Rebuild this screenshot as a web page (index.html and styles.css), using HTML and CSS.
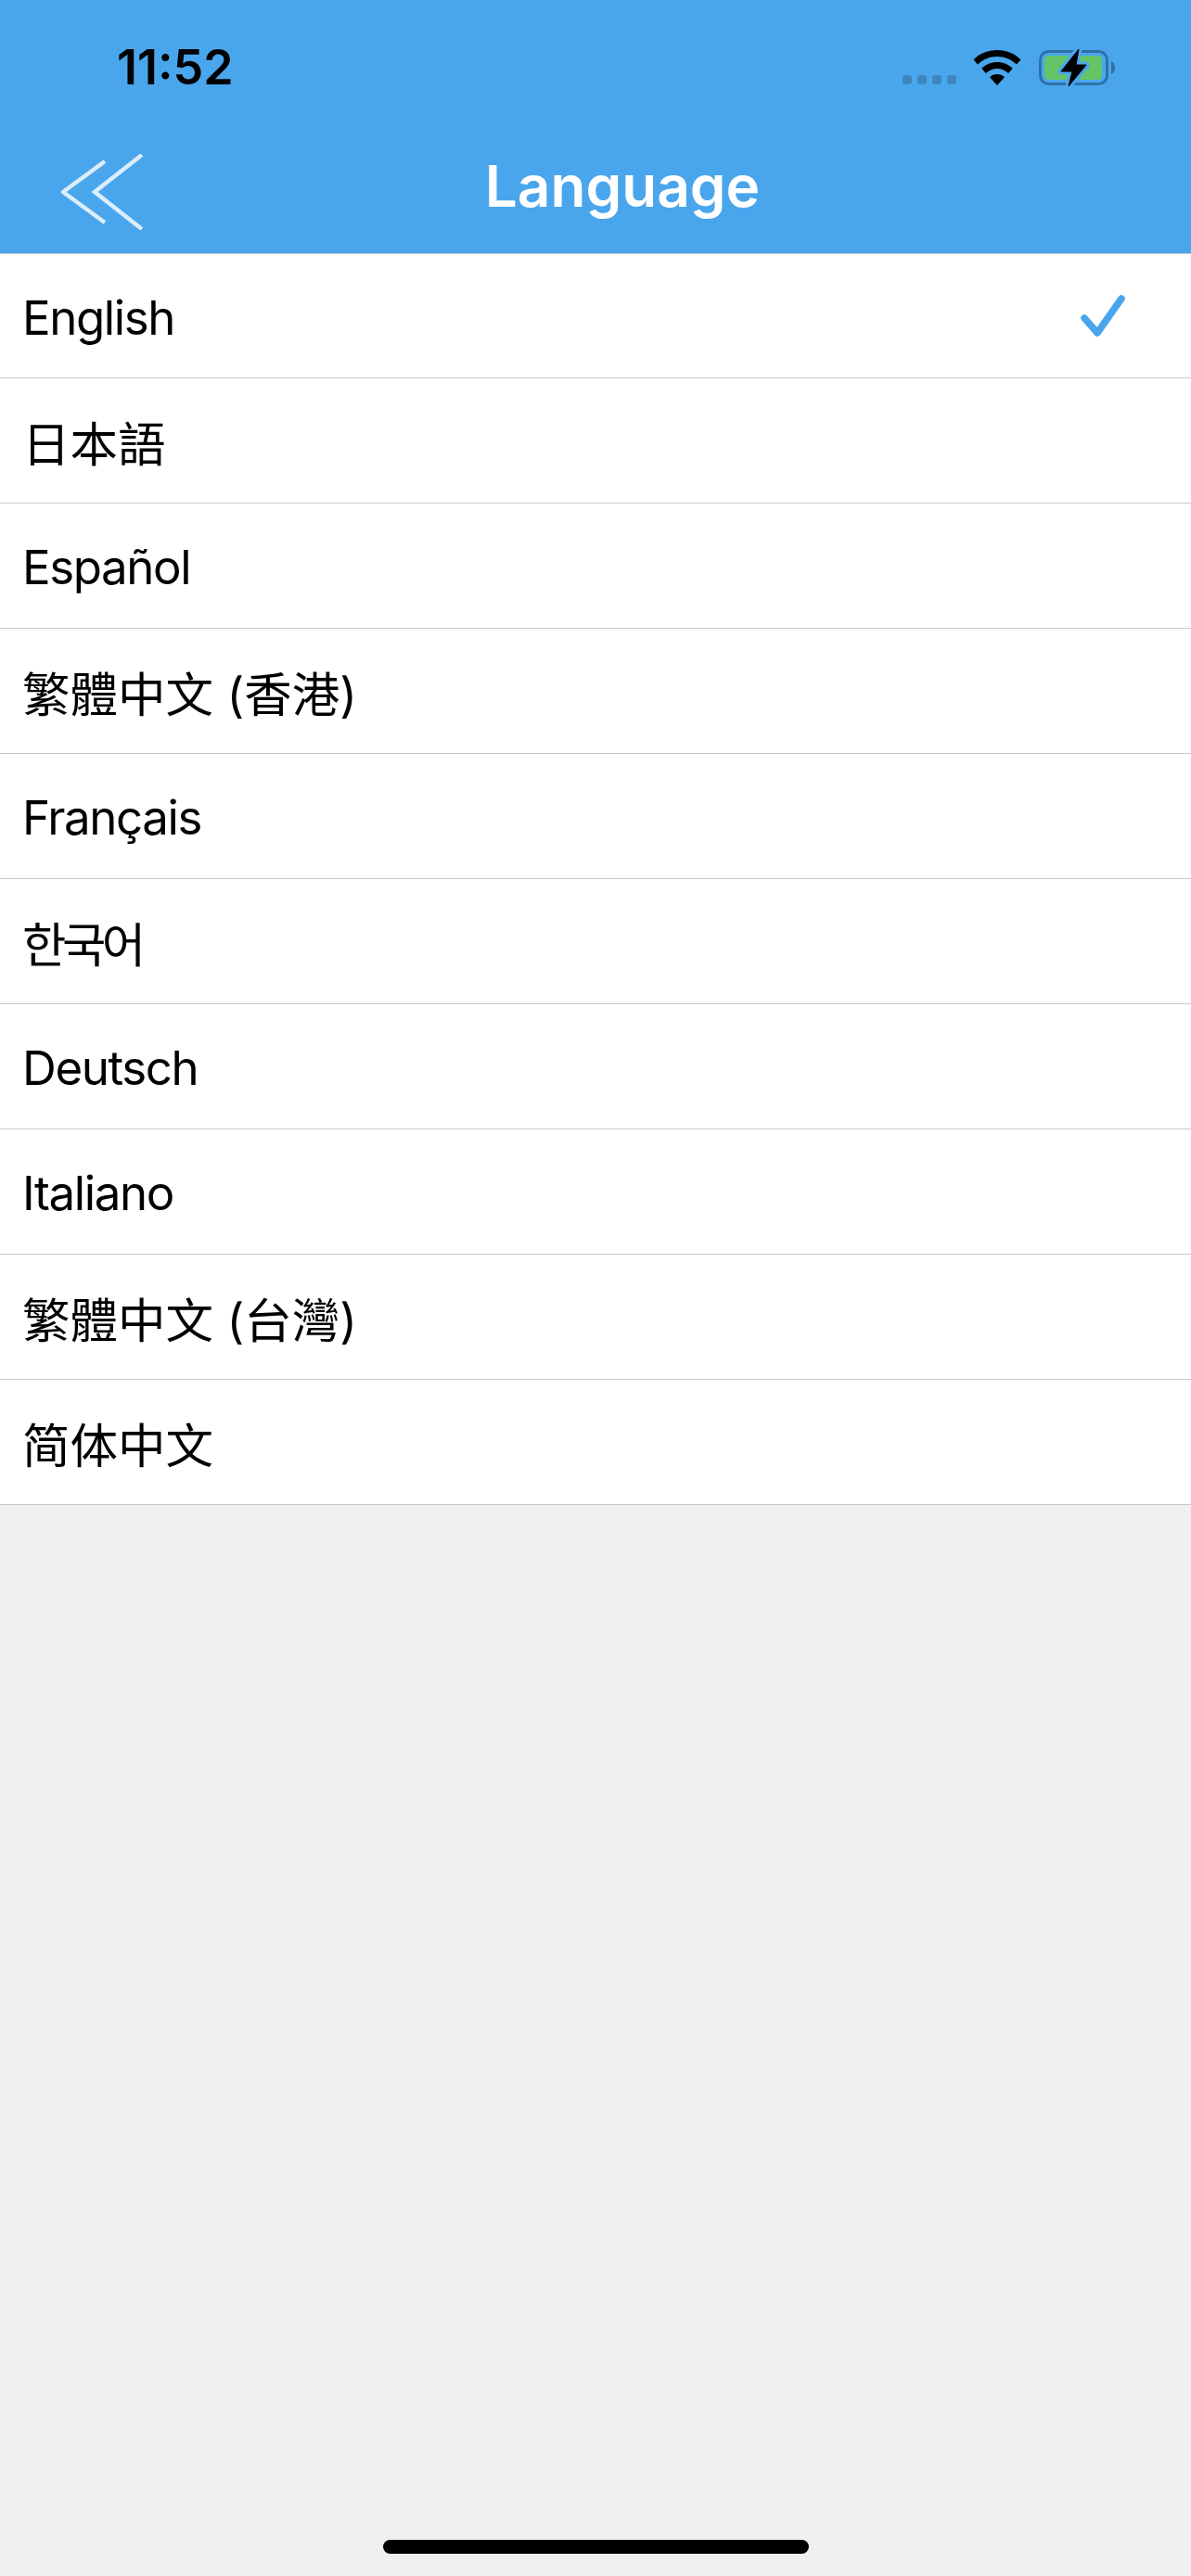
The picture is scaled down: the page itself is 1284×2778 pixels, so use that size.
FILE: index.html
```html
<!DOCTYPE html>
<html lang="en">
<head>
    <meta charset="UTF-8">
    <meta name="viewport" content="width=device-width, initial-scale=1.0">
    <title>Language</title>
    <link rel="stylesheet" href="styles.css">
</head>
<body>

    <header class="header">
        <div class="status-bar">
            <span class="time">11:52</span>
            <div class="status-icons">
                <div class="signal">
                    <span class="dot"></span>
                    <span class="dot"></span>
                    <span class="dot"></span>
                    <span class="dot"></span>
                </div>
                <svg class="wifi" width="52" height="38" viewBox="0 0 52 38">
                    <path d="M26 0C16 0 7.500 3.700 0.500 10.200L5 15.500C10.500 10.300 17.800 7 26 7C34.200 7 41.500 10.300 47 15.500L51.500 10.200C44.500 3.700 36 0 26 0Z"/>
                    <path d="M26 13C19.500 13 13.800 15.500 9.300 19.700L13.800 25C17 22 21.300 20 26 20C30.700 20 35 22 38.200 25L42.700 19.700C38.200 15.500 32.500 13 26 13Z"/>
                    <path d="M26 26C23 26 20.200 27.200 18 29.200L26 38L34 29.200C31.800 27.200 29 26 26 26Z"/>
                </svg>
                <svg class="battery" width="84" height="42" viewBox="0 0 84 42">
                    <rect x="1.500" y="3.500" width="72" height="35" rx="9" fill="none" stroke="#2f71a6" stroke-width="3"/>
                    <rect x="6" y="8" width="62" height="26" rx="4.500" fill="#65c466"/>
                    <path d="M78 14C80.500 15 82 17.500 82 21C82 24.500 80.500 27 78 28Z" fill="#2f71a6"/>
                    <path d="M43 1L24 25H36L32 41L51 18H40L43 1Z" fill="none" stroke="#4aa6ec" stroke-width="7" stroke-linejoin="round"/>
                    <path d="M43 1L24 25H36L32 41L51 18H40L43 1Z" stroke="#000" stroke-width="1" stroke-linejoin="round"/>
                </svg>
            </div>
        </div>
        <div class="nav-bar">
            <svg class="back" width="88" height="82" viewBox="0 0 88 82">
                <path d="M47 8L2 41L47 74"/>
                <path d="M87 1L36 41L87 81"/>
            </svg>
            <h1 class="nav-title">Language</h1>
        </div>
    </header>

    <ul class="lang-list">
        <li class="lang-row latin">
            <span>English</span>
            <svg class="check" width="48" height="46" viewBox="0 0 48 46">
                <path d="M4 25L18 41L44 4"/>
            </svg>
        </li>
        <li class="lang-row"><span>日本語</span></li>
        <li class="lang-row latin"><span>Español</span></li>
        <li class="lang-row"><span>繁體中文 (香港)</span></li>
        <li class="lang-row latin"><span>Français</span></li>
        <li class="lang-row korean"><span>한국어</span></li>
        <li class="lang-row latin"><span>Deutsch</span></li>
        <li class="lang-row latin"><span>Italiano</span></li>
        <li class="lang-row"><span>繁體中文 (台灣)</span></li>
        <li class="lang-row"><span>简体中文</span></li>
    </ul>

    <div class="home-bar"></div>

</body>
</html>
```

FILE: styles.css
```css
body {
    font-family: Inter, "Noto Sans CJK TC", "Noto Sans CJK KR", sans-serif;
    background-color: #f0f0f0;
    color: #000;
    margin: 0;
    height: 2778px;
    overflow: hidden;
    position: relative;
}
.header {
    background-color: #4aa6ec;
    height: 273px;
    border-bottom: 1px solid #c8c8c8;
}
.status-bar {
    height: 145px;
    display: flex;
    align-items: center;
    justify-content: space-between;
    padding: 0 80px 0 126px;
}
.time {
    font-size: 52px;
    font-weight: 600;
}
.status-icons {
    display: flex;
    align-items: center;
    gap: 19px;
}
.signal {
    display: flex;
    gap: 6px;
    margin-top: 26px;
    margin-right: -1px;
}
.dot {
    width: 10px;
    height: 10px;
    border-radius: 3px;
    background-color: #3d86c0;
}
.nav-bar {
    height: 128px;
    display: flex;
    align-items: center;
    justify-content: center;
    position: relative;
}
.back {
    position: absolute;
    left: 66px;
    top: 21px;
    fill: none;
    stroke: #fff;
    stroke-width: 4.500;
    stroke-opacity: 0.8;
}
.nav-title {
    margin: 0 0 17px 58px;
    color: #fff;
    font-size: 62px;
    font-weight: 600;
}
.lang-list {
    list-style: none;
    margin: 0;
    padding: 0;
}
.lang-row {
    height: 134px;
    display: flex;
    align-items: center;
    justify-content: space-between;
    padding: 0 71px 0 24px;
    background-color: #fff;
    border-bottom: 1px solid #c8c8c8;
    font-size: 51.500px;
}
.lang-row:first-child {
    height: 133px;
}
.latin span {
    font-size: 51px;
    letter-spacing: -1.400px;
    margin-top: 3px;
}
.korean span {
    letter-spacing: -4.500px;
}
.check {
    fill: none;
    stroke: #4aa6ec;
    stroke-width: 7.500;
    stroke-linecap: round;
    stroke-linejoin: round;
}
.home-bar {
    position: absolute;
    left: 413px;
    top: 2739px;
    width: 459px;
    height: 15px;
    border-radius: 8px;
    background-color: #000;
}
```
